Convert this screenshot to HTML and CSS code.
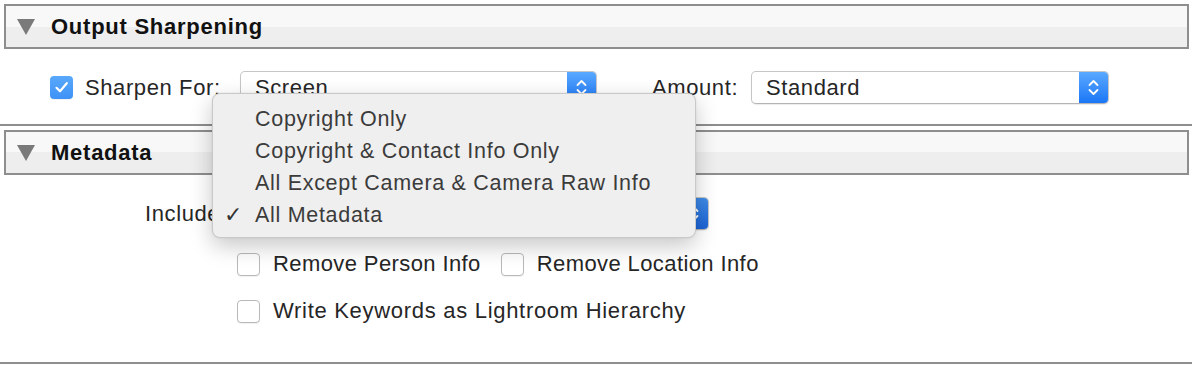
FILE: index.html
```html
<!DOCTYPE html>
<html>
<head>
<meta charset="utf-8">
<link rel="stylesheet" href="styles.css">
</head>
<body>
  <section class="panel">
    <div class="panel-header"><span class="tri"></span><span class="title">Output Sharpening</span></div>
    <div class="sharpen-row">
      <span class="checkbox checked">
        <svg width="23" height="23" viewBox="0 0 23 23"><path d="M6.5 11.8 L10 15.3 L16.8 7.2" fill="none" stroke="#fff" stroke-width="2.2" stroke-linecap="round" stroke-linejoin="round"/></svg>
      </span>
      <span class="label sharpen-label">Sharpen For:</span>
      <div class="popup popup-screen">
        <span class="popup-text">Screen</span>
        <span class="popup-arrows"><svg width="29" height="33" viewBox="0 0 29 33"><path d="M10.5 14 L14.5 10 L18.5 14 M10.5 19 L14.5 23 L18.5 19" fill="none" stroke="#fff" stroke-width="1.8" stroke-linecap="round" stroke-linejoin="round"/></svg></span>
      </div>
      <span class="label amount-label">Amount:</span>
      <div class="popup popup-amount">
        <span class="popup-text">Standard</span>
        <span class="popup-arrows"><svg width="29" height="33" viewBox="0 0 29 33"><path d="M10.5 14 L14.5 10 L18.5 14 M10.5 19 L14.5 23 L18.5 19" fill="none" stroke="#fff" stroke-width="1.8" stroke-linecap="round" stroke-linejoin="round"/></svg></span>
      </div>
    </div>
  </section>
  <div class="sep"></div>
  <section class="panel panel-meta">
    <div class="panel-header"><span class="tri"></span><span class="title">Metadata</span></div>
    <div class="include-row">
      <span class="label include-label">Include:</span>
      <div class="popup popup-include">
        <span class="popup-text"></span>
        <span class="popup-arrows dim"><svg width="29" height="33" viewBox="0 0 29 33"><path d="M10.5 14 L14.5 10 L18.5 14 M10.5 19 L14.5 23 L18.5 19" fill="none" stroke="#fff" stroke-width="1.8" stroke-linecap="round" stroke-linejoin="round"/></svg></span>
      </div>
    </div>
    <div class="check-row">
      <span class="checkbox"></span><span class="label">Remove Person Info</span>
      <span class="checkbox second"></span><span class="label">Remove Location Info</span>
    </div>
    <div class="check-row row-two">
      <span class="checkbox"></span><span class="label">Write Keywords as Lightroom Hierarchy</span>
    </div>
  </section>
  <div class="sep sep-bottom"></div>

  <div class="menu">
    <div class="menu-item">Copyright Only</div>
    <div class="menu-item">Copyright &amp; Contact Info Only</div>
    <div class="menu-item">All Except Camera &amp; Camera Raw Info</div>
    <div class="menu-item selected"><span class="mark">✓</span>All Metadata</div>
  </div>
</body>
</html>
```

FILE: styles.css
```css
* { box-sizing: border-box; }
html, body { margin: 0; padding: 0; background: #fff; }
body {
  width: 1192px;
  height: 368px;
  overflow: hidden;
  position: relative;
  padding-top: 4px;
  font-family: "Liberation Sans", Arial, sans-serif;
  font-size: 22px;
  letter-spacing: 0.6px;
  color: #262626;
}

.panel-header {
  margin: 0 3px 0 4px;
  height: 45px;
  border: 2px solid #8e8e8e;
  background: linear-gradient(#f8f8f8 0, #f8f8f8 50%, #eeeeee 50%, #eeeeee 100%);
  display: flex;
  align-items: center;
}
.tri {
  width: 0; height: 0;
  margin-left: 11px;
  border-left: 9.5px solid transparent;
  border-right: 9.5px solid transparent;
  border-top: 16px solid #7a7a7a;
}
.title {
  margin-left: 16px;
  font-weight: bold;
  color: #111;
  letter-spacing: 0.75px;
}

.sharpen-row {
  display: flex;
  align-items: center;
  padding-left: 50px;
  margin-top: 22px;
  height: 33px;
  margin-bottom: 20px;
}
.label { white-space: nowrap; }
.sharpen-label { margin-left: 12px; width: 155px; }
.amount-label { margin-left: 55px; width: 99px; }

.checkbox {
  width: 23px; height: 23px;
  border: 1px solid #b9b9b9;
  border-radius: 4px;
  background: #fff;
  box-shadow: 0 1px 1px rgba(0,0,0,0.06);
  flex: none;
  display: block;
}
.checkbox.checked {
  border: none;
  background: linear-gradient(#59a8fb, #3e92f6);
}
.checkbox.checked svg { display: block; }

.popup {
  height: 33px;
  border: 1px solid #c6c6c6;
  border-bottom-color: #b4b4b4;
  border-radius: 5px;
  background: #fff;
  box-shadow: 0 1px 1px rgba(0,0,0,0.08);
  display: flex;
  align-items: center;
  overflow: hidden;
  flex: none;
}
.popup-text { flex: 1; padding-left: 14px; }
.popup-arrows {
  width: 29px;
  height: 100%;
  flex: none;
  background: linear-gradient(#5aa8ff, #1b77f6);
  display: flex;
  align-items: center;
  justify-content: center;
}
.popup-arrows svg { display: block; }
.popup-arrows.dim { background: linear-gradient(#3f8be8, #1b63d6); }
.popup-screen { width: 357px; }
.popup-amount { width: 358px; }

.sep {
  height: 2px;
  background: #8e8e8e;
  margin-bottom: 4px;
}

.include-row {
  display: flex;
  align-items: center;
  margin-top: 22px;
  padding-left: 145px;
  height: 33px;
}
.include-label { width: 95px; }
.popup-include { width: 469px; }

.check-row {
  display: flex;
  align-items: center;
  padding-left: 237px;
  margin-top: 22px;
  height: 24px;
  letter-spacing: 0.4px;
}
.check-row .checkbox { margin-right: 13px; }
.check-row .checkbox.second { margin-left: 20px; }
.check-row.row-two { margin-top: 23px; letter-spacing: 0.7px; }

.sep-bottom { position: absolute; left: 0; right: 0; top: 362px; margin: 0; }

.menu {
  position: absolute;
  left: 212px;
  top: 93px;
  width: 484px;
  height: 145px;
  padding-top: 9px;
  background: #efefef;
  border: 1px solid #c9c9c9;
  border-radius: 8px;
  box-shadow: 0 8px 22px rgba(0,0,0,0.22), 0 0 2px rgba(0,0,0,0.1);
  color: #3b3b3b;
  font-size: 21.5px;
  letter-spacing: 0.7px;
}
.menu-item {
  height: 32px;
  line-height: 32px;
  padding-left: 42px;
  position: relative;
  white-space: nowrap;
}
.mark {
  position: absolute;
  left: 11px;
  top: 0;
  font-family: "DejaVu Sans", sans-serif;
  font-size: 22px;
  color: #333;
}
```
